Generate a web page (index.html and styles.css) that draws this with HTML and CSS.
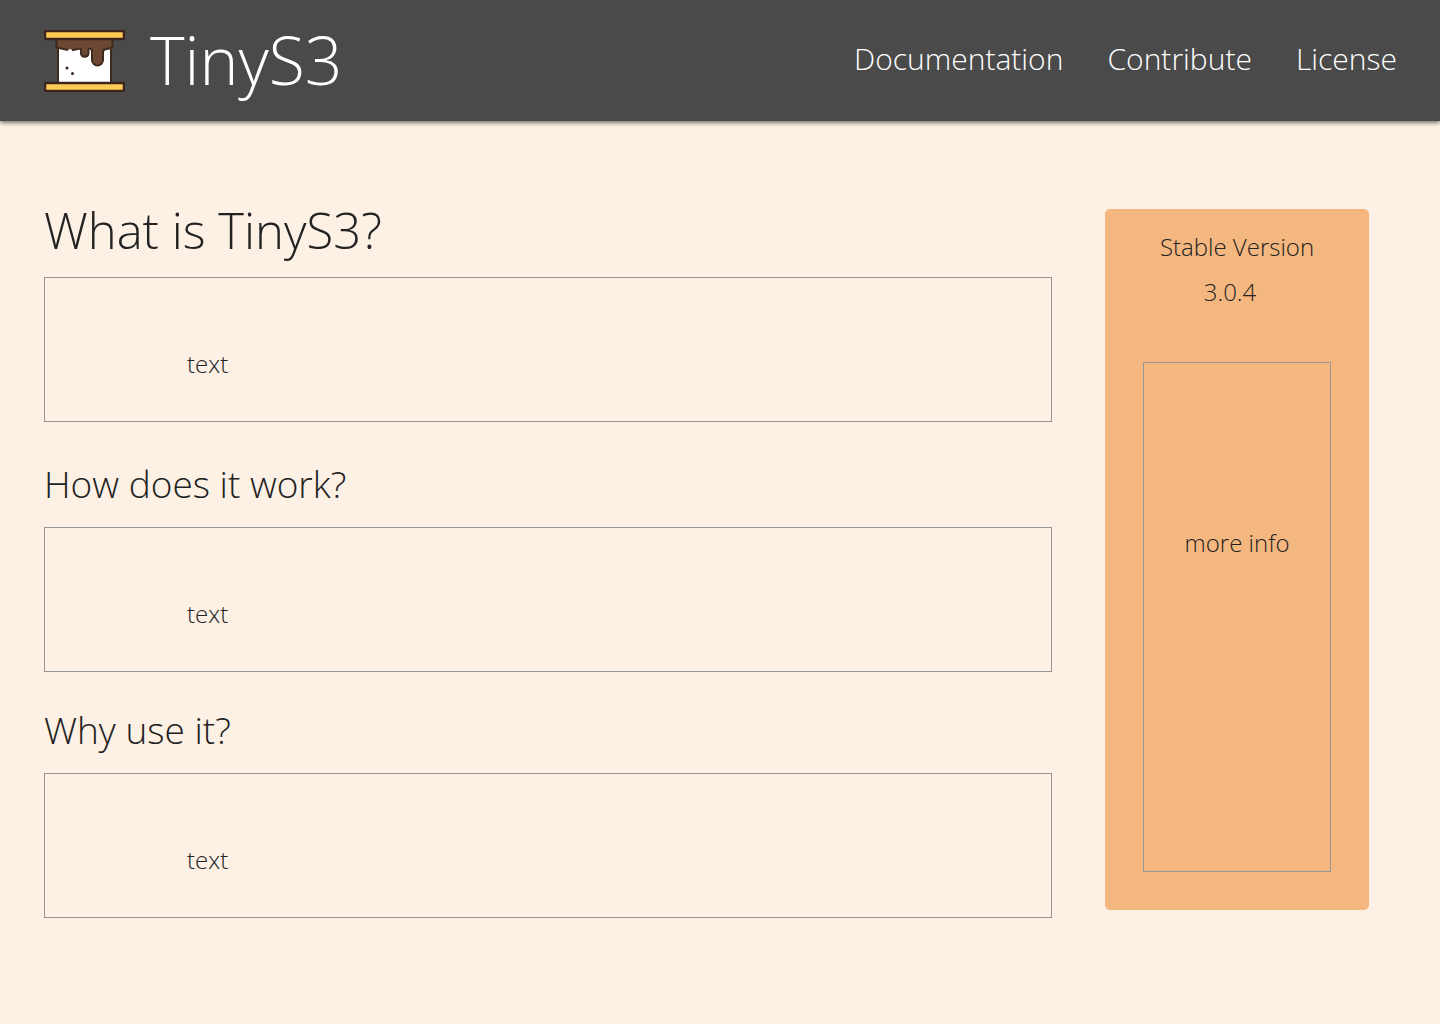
FILE: index.html
```html
<!DOCTYPE html>
<html lang="en">
<head>
  <meta charset="utf-8">
  <meta name="viewport" content="width=device-width, initial-scale=1">
  <title>TinyS3</title>
  <link rel="stylesheet" href="styles.css">
</head>
<body>
  <header class="site-header">
    <a class="brand" href="#">
      <svg class="brand-logo" viewBox="0 0 81 62" aria-hidden="true">
        <rect x="14" y="10" width="53" height="43" fill="#fff" stroke="#3f2a20" stroke-width="2"/>
        <path d="M12 9H69V19L62 20Q59 20.500 59 23V30A5.500 5.500 0 0 1 48 30V22Q48 19 46 18.500Q44.500 18 44.500 20V23.500A3.800 3.800 0 0 1 37 23.500V20L36 18.500L28 20L26 19L24 20L12 18Z" fill="#6c4832"/>
        <path d="M24 20L12.500 17.500V10M28 20.200L36 18.500Q37 18.500 37 20V23.500A3.800 3.800 0 0 0 44.500 23.500V20Q44.500 18 46 18.500Q48 19 48 22V30A5.500 5.500 0 0 0 59 30V22Q59 19.500 62 19L68.500 17.500V10" fill="none" stroke="#3f2a20" stroke-width="2"/>
        <rect x="1" y="1" width="79" height="8" rx="1" fill="#ffcb57" stroke="#3c241c" stroke-width="2.500"/>
        <rect x="1" y="53" width="79" height="8" rx="1" fill="#ffcb57" stroke="#3c241c" stroke-width="2.500"/>
        <circle cx="23" cy="38" r="1.500" fill="#3c241c"/>
        <circle cx="28.500" cy="43.500" r="1.500" fill="#3c241c"/>
      </svg>
      <span class="brand-name">TinyS3</span>
    </a>
    <nav class="site-nav">
      <a href="#">Documentation</a>
      <a href="#">Contribute</a>
      <a href="#">License</a>
    </nav>
  </header>

  <div class="page">
    <main class="content">
      <section class="section section-intro">
        <h1 class="title">What is TinyS3?</h1>
        <div class="panel"><p>text</p></div>
      </section>
      <section class="section">
        <h2 class="subtitle">How does it work?</h2>
        <div class="panel"><p>text</p></div>
      </section>
      <section class="section">
        <h2 class="subtitle">Why use it?</h2>
        <div class="panel"><p>text</p></div>
      </section>
    </main>

    <aside class="release">
      <p class="release-label">Stable Version</p>
      <p class="release-number">3.0.4</p>
      <div class="release-info"><p>more info</p></div>
    </aside>
  </div>
</body>
</html>
```
FILE: styles.css
```css
* {
  box-sizing: border-box;
}

body {
  margin: 0;
  background: #fdf0e4;
  color: #222;
  font-family: "Open Sans", Lato, sans-serif;
  font-size: 24px;
  font-weight: 300;
  line-height: 32px;
}

h1,
h2,
p {
  margin: 0;
}

a {
  color: inherit;
  text-decoration: none;
}

.site-header {
  display: flex;
  align-items: center;
  justify-content: space-between;
  min-height: 121px;
  padding: 0 43px 0 44px;
  background: #4a4a4a;
  color: #fff;
  box-shadow: 0 2px 4px rgba(0, 0, 0, 0.5);
}

.brand {
  display: flex;
  align-items: center;
  gap: 25px;
}

.brand-logo {
  width: 81px;
  height: 62px;
}

.brand-name {
  padding-bottom: 4px;
  font-size: 66px;
  line-height: 80px;
}

.site-nav {
  display: flex;
  gap: 44px;
  padding-bottom: 4px;
  font-size: 30px;
  line-height: 40px;
}

.page {
  display: grid;
  grid-template-columns: 1fr 264px;
  gap: 53px;
  align-items: start;
  padding: 88px 71px 88px 44px;
}

.section {
  margin-bottom: 40px;
}

.section-intro {
  margin-bottom: 44px;
}

.section:last-child {
  margin-bottom: 0;
}

.title {
  margin-bottom: 26px;
  font-size: 49px;
  font-weight: 300;
  line-height: 42px;
}

.subtitle {
  margin-bottom: 25px;
  font-size: 37px;
  font-weight: 300;
  line-height: 36px;
}

.panel {
  min-height: 145px;
  padding: 70px 142px 40px;
  border: 1px solid #979797;
}

.release {
  padding: 22px 38px 38px;
  border-radius: 5px;
  background: #f4b780;
  text-align: center;
}

.release-label {
  margin-bottom: 13px;
}

.release-number {
  margin-bottom: 54px;
  padding-right: 14px;
}

.release-info {
  min-height: 510px;
  padding: 164px 0;
  border: 1px solid #979797;
}
```
